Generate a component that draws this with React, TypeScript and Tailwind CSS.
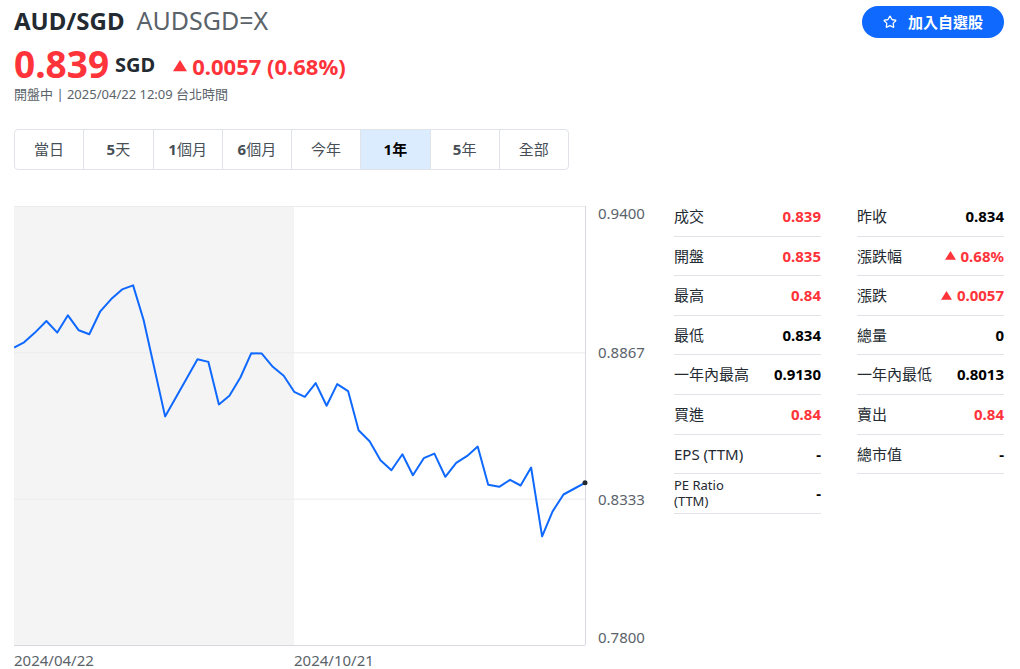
import { Star } from "lucide-react"

const FONT = "font-['Noto_Sans','Noto_Sans_CJK_TC',sans-serif]"
const RED = "text-[#ff333a]"

// line points measured off the reference (zoomed coords), mapped into the plot box below
const RAW: [number, number][] = [
  [33, 473], [57, 457], [83, 428], [110, 393], [136, 428], [161, 376], [187, 421], [212, 433],
  [238, 364], [264, 327], [290, 298], [316, 286], [341, 390], [392, 680], [417, 625], [443, 567],
  [469, 508], [495, 516], [520, 644], [545, 618], [571, 563], [597, 490], [622, 491], [648, 531],
  [674, 558], [699, 606], [724, 621], [750, 580], [776, 648], [801, 583], [827, 604], [852, 722],
  [878, 755], [904, 812], [930, 842], [956, 794], [981, 857], [1007, 806], [1032, 792], [1058, 862],
  [1084, 820], [1110, 799], [1135, 771], [1160, 886], [1186, 892], [1212, 871], [1237, 888],
  [1262, 834], [1288, 1041], [1313, 966], [1339, 915], [1365, 897], [1390, 880],
]
const PLOT_W = 571
const PLOT_H = 439
const TOP = 10
const pts = RAW.map(([x, y]) => [((x - 33) * PLOT_W) / 1357, TOP + ((y - 47) * PLOT_H) / 1321])

const TABS = [
  { d: "", t: "當日" },
  { d: "5", t: "天" },
  { d: "1", t: "個月" },
  { d: "6", t: "個月" },
  { d: "", t: "今年" },
  { d: "1", t: "年", active: true },
  { d: "5", t: "年" },
  { d: "", t: "全部" },
]

type Stat = { label: React.ReactNode; value: string; red?: boolean; up?: boolean }

const LEFT: Stat[] = [
  { label: "成交", value: "0.839", red: true },
  { label: "開盤", value: "0.835", red: true },
  { label: "最高", value: "0.84", red: true },
  { label: "最低", value: "0.834" },
  { label: "一年內最高", value: "0.9130" },
  { label: "買進", value: "0.84", red: true },
  { label: "EPS (TTM)", value: "-" },
  {
    label: (
      <span className="block text-[13px] leading-[16px]">
        PE Ratio
        <br />
        (TTM)
      </span>
    ),
    value: "-",
  },
]

const RIGHT: Stat[] = [
  { label: "昨收", value: "0.834" },
  { label: "漲跌幅", value: "0.68%", red: true, up: true },
  { label: "漲跌", value: "0.0057", red: true, up: true },
  { label: "總量", value: "0" },
  { label: "一年內最低", value: "0.8013" },
  { label: "賣出", value: "0.84", red: true },
  { label: "總市值", value: "-" },
]

function UpTri({ size = 12 }: { size?: number }) {
  return (
    <svg width={size} height={size * 0.8} viewBox="0 0 10 8" className="fill-[#ff333a]">
      <polygon points="5,0 10,8 0,8" />
    </svg>
  )
}

function StatCol({ rows }: { rows: Stat[] }) {
  return (
    <div className="flex w-[147px] flex-col">
      {rows.map((r, i) => (
        <div
          key={i}
          className="flex h-[39.6px] items-center justify-between border-b border-[#e0e4e9] text-[15px]"
        >
          <span className="text-[#232a31]">{r.label}</span>
          <span
            className={`flex items-center gap-[5px] font-bold ${r.red ? RED : "text-black"}`}
          >
            {r.up && <UpTri size={11} />}
            {r.value}
          </span>
        </div>
      ))}
    </div>
  )
}

function Chart() {
  const d = pts.map(([x, y], i) => `${i ? "L" : "M"}${x.toFixed(1)},${y.toFixed(1)}`).join(" ")
  const last = pts[pts.length - 1]
  const grid = [
    { y: TOP, v: "0.9400", ty: 23 },
    { y: TOP + PLOT_H / 3, v: "0.8867", ty: 162 },
    { y: TOP + (PLOT_H * 2) / 3, v: "0.8333", ty: 309 },
    { y: TOP + PLOT_H, v: "0.7800", ty: 447 },
  ]
  return (
    <svg width={648} height={473} className="block">
      <rect x={0} y={TOP} width={280} height={PLOT_H} fill="#f4f4f4" />
      {grid.slice(0, 3).map((g) => (
        <line key={g.v} x1={0} x2={PLOT_W} y1={g.y + 0.5} y2={g.y + 0.5} stroke="#ebebeb" />
      ))}
      <line x1={0} x2={PLOT_W} y1={TOP + PLOT_H + 0.5} y2={TOP + PLOT_H + 0.5} stroke="#d6d9e0" />
      <line x1={PLOT_W + 0.5} x2={PLOT_W + 0.5} y1={TOP} y2={TOP + PLOT_H} stroke="#d6d9e0" />
      <path d={d} fill="none" stroke="#0f69ff" strokeWidth={2} strokeLinejoin="round" />
      <circle cx={last[0]} cy={last[1]} r={2.5} fill="#232a31" />
      {grid.map((g) => (
        <text key={g.v} x={584} y={g.ty} fontSize={15} fill="#5b636a">
          {g.v}
        </text>
      ))}
      <text x={0} y={470} fontSize={15} fill="#5b636a">
        2024/04/22
      </text>
      <text x={280} y={470} fontSize={15} fill="#5b636a">
        2024/10/21
      </text>
    </svg>
  )
}

export default function App() {
  return (
    <div className={`h-[669px] w-[1020px] overflow-hidden bg-white text-[#232a31] ${FONT}`}>
      {/* Quote header */}
      <div className="flex items-start justify-between pl-[14px] pr-[16px] pt-[4px]">
        <div>
          <div className="flex h-[34px] items-center gap-[12px] text-[24px]">
            <span className="font-bold">AUD/SGD</span>
            <span className="text-[25px] text-[#5b636a]">AUDSGD=X</span>
          </div>
          <div className="flex h-[49px] items-center pt-[1px]">
            <span className={`text-[37px] font-bold leading-none ${RED}`}>0.839</span>
            <span className="ml-[6px] mt-[3px] text-[20px] font-bold leading-none">SGD</span>
            <span
              className={`ml-[18px] mt-[6px] flex items-center gap-[5px] text-[22px] font-bold leading-none ${RED}`}
            >
              <UpTri size={14} />
              0.0057 (0.68%)
            </span>
          </div>
          <div className="h-[15px] text-[13px] leading-[15px] text-[#5b636a]">
            開盤中 | 2025/04/22 12:09 台北時間
          </div>
        </div>
        <button className="mt-[2px] flex h-[32px] items-center gap-[11px] rounded-full bg-[#0f69ff] px-[21px] text-[15px] font-bold text-white">
          <Star size={14} strokeWidth={2.2} />
          加入自選股
        </button>
      </div>

      {/* Range tabs */}
      <div className="ml-[14px] mt-[27px] flex w-[555px] overflow-hidden rounded-[4px] border border-[#e0e4e9]">
        {TABS.map((t, i) => (
          <div
            key={i}
            className={`flex h-[39px] flex-1 items-center justify-center text-[15px] ${
              i ? "border-l border-[#e0e4e9]" : ""
            } ${t.active ? "bg-[#dbecff] text-black" : "text-[#464e56]"}`}
          >
            {t.d && <span className="font-bold">{t.d}</span>}
            <span className={t.active ? "font-bold" : ""}>{t.t}</span>
          </div>
        ))}
      </div>

      {/* Chart + stats */}
      <div className="mt-[26px] flex">
        <div className="ml-[14px]">
          <Chart />
        </div>
        <div className="ml-[12px] mt-[1px] flex items-start gap-[36px]">
          <StatCol rows={LEFT} />
          <StatCol rows={RIGHT} />
        </div>
      </div>
    </div>
  )
}
